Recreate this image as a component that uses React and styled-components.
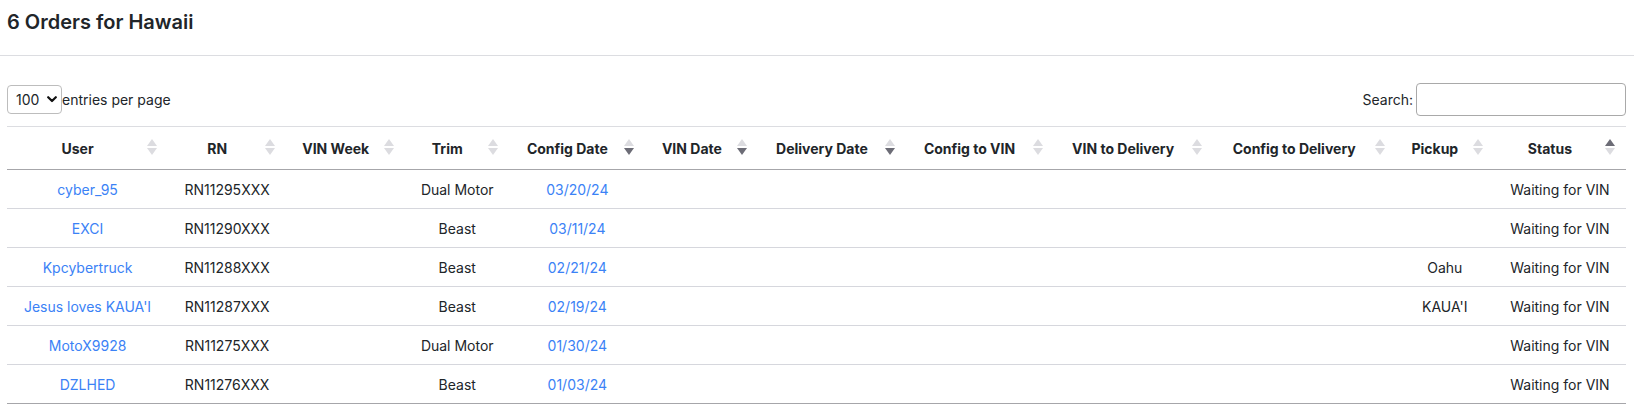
import React from "react";
import styled, { createGlobalStyle } from "styled-components";

const GlobalStyle = createGlobalStyle`
  html, body { margin: 0; padding: 0; background: #fff; }
  body {
    font-family: Inter, "Noto Sans", "Liberation Sans", sans-serif;
    color: #212529;
    font-size: 14px;
  }
  * { box-sizing: border-box; }
`;

const Header = styled.header`
  height: 56px;
  padding: 10px 7px 0;
  border-bottom: 1px solid #dcdde1;
`;

const Title = styled.h5`
  margin: 0;
  font-size: 20px;
  line-height: 24px;
  font-weight: 600;
  color: #212529;
`;

const Body = styled.section`
  padding: 27px 8px 0 7px;
`;

const Toolbar = styled.div`
  display: flex;
  align-items: center;
  justify-content: space-between;
  height: 33px;
  margin-bottom: 10px;
`;

const Length = styled.label`
  display: flex;
  align-items: center;
  font-size: 14px;
  color: #212529;
`;

const SelectWrap = styled.span`
  position: relative;
  display: inline-flex;
`;

const Select = styled.select`
  appearance: none;
  -webkit-appearance: none;
  width: 55px;
  height: 29px;
  padding: 0 0 0 8px;
  border: 1px solid #bdbdbd;
  border-radius: 4px;
  background: #fff;
  font-family: inherit;
  font-size: 14px;
  color: #212529;
`;

const Chevron = styled.svg`
  position: absolute;
  right: 5px;
  top: 11px;
  width: 10px;
  height: 7px;
  pointer-events: none;
`;

const Search = styled.label`
  display: flex;
  align-items: center;
  gap: 3px;
  font-size: 14px;
  color: #212529;
`;

const SearchInput = styled.input`
  width: 210px;
  height: 33px;
  border: 1px solid #a9a9a9;
  border-radius: 4px;
  padding: 0 8px;
  font-family: inherit;
  font-size: 14px;
`;

const Table = styled.table`
  width: 100%;
  table-layout: fixed;
  border-collapse: collapse;
  border-top: 1px solid #dcdde1;
`;

const Th = styled.th`
  position: relative;
  height: 43px;
  padding: 0 30px 0 10px;
  text-align: center;
  font-size: 14px;
  font-weight: 700;
  color: #212529;
  border-bottom: 1px solid #a6a6aa;
  white-space: nowrap;
`;

const Sort = styled.svg`
  position: absolute;
  right: 11px;
  top: 12px;
  width: 10px;
  height: 17px;
`;

const Tr = styled.tr`
  &:last-child td { border-bottom-color: #a6a6aa; }
`;

const Td = styled.td`
  height: 39px;
  padding: 0 10px;
  text-align: center;
  font-size: 14px;
  color: #212529;
  border-bottom: 1px solid #d6d7dd;
  white-space: nowrap;
`;

const Link = styled.a`
  color: #3b82f6;
  text-decoration: none;
`;

const LIGHT = "#dcdce0";
const DARK = "#6c6c76";

function SortIcon({ dir }) {
  return (
    <Sort viewBox="0 0 10 17">
      <polygon points="5,0 10,7 0,7" fill={dir === "asc" ? DARK : LIGHT} />
      <polygon points="0,9 10,9 5,16" fill={dir === "desc" ? DARK : LIGHT} />
    </Sort>
  );
}

const columns = [
  { label: "User", w: 161 },
  { label: "RN", w: 118 },
  { label: "VIN Week", w: 119 },
  { label: "Trim", w: 104 },
  { label: "Config Date", w: 136, dir: "desc" },
  { label: "VIN Date", w: 113, dir: "desc" },
  { label: "Delivery Date", w: 147, dir: "desc" },
  { label: "Config to VIN", w: 148 },
  { label: "VIN to Delivery", w: 159 },
  { label: "Config to Delivery", w: 183 },
  { label: "Pickup", w: 98 },
  { label: "Status", w: 132, dir: "asc" },
];

const rows = [
  ["cyber_95", "RN11295XXX", "Dual Motor", "03/20/24", ""],
  ["EXCI", "RN11290XXX", "Beast", "03/11/24", ""],
  ["Kpcybertruck", "RN11288XXX", "Beast", "02/21/24", "Oahu"],
  ["Jesus loves KAUA'I", "RN11287XXX", "Beast", "02/19/24", "KAUA'I"],
  ["MotoX9928", "RN11275XXX", "Dual Motor", "01/30/24", ""],
  ["DZLHED", "RN11276XXX", "Beast", "01/03/24", ""],
];

export default function App() {
  return (
    <>
      <GlobalStyle />
      <Header>
        <Title>6 Orders for Hawaii</Title>
      </Header>
      <Body>
        <Toolbar>
          <Length>
            <SelectWrap>
              <Select defaultValue="100">
                <option>10</option>
                <option>25</option>
                <option>50</option>
                <option>100</option>
              </Select>
              <Chevron viewBox="0 0 10 7">
                <path d="M1.2 1.2 L5 5 L8.8 1.2" fill="none" stroke="#111" strokeWidth="2.2" strokeLinecap="round" strokeLinejoin="round" />
              </Chevron>
            </SelectWrap>
            entries per page
          </Length>
          <Search>
            Search:
            <SearchInput type="search" />
          </Search>
        </Toolbar>
        <Table>
          <colgroup>
            {columns.map((c) => (
              <col key={c.label} style={{ width: c.w }} />
            ))}
          </colgroup>
          <thead>
            <tr>
              {columns.map((c) => (
                <Th key={c.label}>
                  {c.label}
                  <SortIcon dir={c.dir} />
                </Th>
              ))}
            </tr>
          </thead>
          <tbody>
            {rows.map((r) => (
              <Tr key={r[0]}>
                <Td><Link href="#">{r[0]}</Link></Td>
                <Td>{r[1]}</Td>
                <Td></Td>
                <Td>{r[2]}</Td>
                <Td><Link href="#">{r[3]}</Link></Td>
                <Td></Td>
                <Td></Td>
                <Td></Td>
                <Td></Td>
                <Td></Td>
                <Td>{r[4]}</Td>
                <Td>Waiting for VIN</Td>
              </Tr>
            ))}
          </tbody>
        </Table>
      </Body>
    </>
  );
}
